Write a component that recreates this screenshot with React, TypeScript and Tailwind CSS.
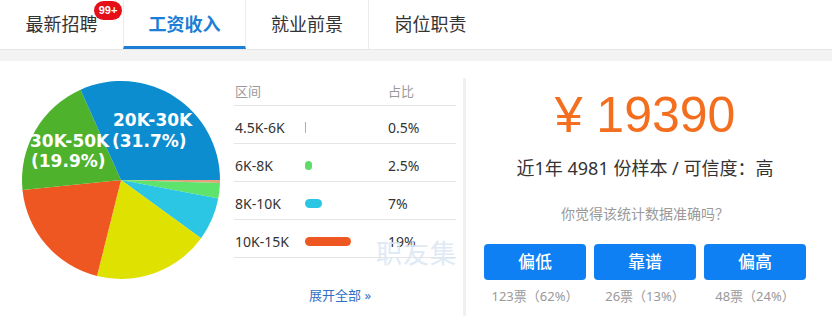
import React from 'react'

const slices = [
  { pct: 0.5, color: '#e2a27c' },
  { pct: 2.5, color: '#5ee36c' },
  { pct: 7, color: '#2bc6e4' },
  { pct: 18.9, color: '#dfe100' },
  { pct: 19.5, color: '#ef5722' },
  { pct: 19.9, color: '#4fb22c' },
  { pct: 31.7, color: '#0c8dd0' },
]

const rows = [
  { range: '4.5K-6K', pct: '0.5%', w: 1, color: '#ee9a6c', line: true },
  { range: '6K-8K', pct: '2.5%', w: 7, color: '#5edb68' },
  { range: '8K-10K', pct: '7%', w: 17, color: '#2bc6e4' },
  { range: '10K-15K', pct: '19%', w: 46, color: '#ef5722' },
]

const votes = [
  { label: '偏低', count: '123票（62%）' },
  { label: '靠谱', count: '26票（13%）' },
  { label: '偏高', count: '48票（24%）' },
]

const tabs = ['最新招聘', '工资收入', '就业前景', '岗位职责']

function Pie() {
  const cx = 121
  const cy = 119
  const r = 99
  let start = 0
  return (
    <svg width="230" height="254" className="shrink-0">
      {slices.map((s, i) => {
        const a0 = (start / 100) * Math.PI * 2
        start += s.pct
        const a1 = (start / 100) * Math.PI * 2
        const large = a1 - a0 > Math.PI ? 1 : 0
        const d = `M${cx},${cy} L${cx + r * Math.cos(a0)},${cy + r * Math.sin(a0)} A${r},${r} 0 ${large} 1 ${cx + r * Math.cos(a1)},${cy + r * Math.sin(a1)} Z`
        return <path key={i} d={d} fill={s.color} />
      })}
      <g fill="#fff" fontFamily="'DejaVu Sans', sans-serif" fontWeight="bold" fontSize="17">
        <text x="113" y="65">20K-30K</text>
        <text x="112" y="86">(31.7%)</text>
        <text x="30" y="86">30K-50K</text>
        <text x="31" y="106">(19.9%)</text>
      </g>
    </svg>
  )
}

export default function App() {
  return (
    <div className="w-[832px] h-[316px] bg-white overflow-hidden" style={{ fontFamily: "'Noto Sans', 'Noto Sans CJK SC', sans-serif" }}>
      {/* tab bar */}
      <div className="flex h-[49px] bg-white">
        {tabs.map((t, i) => (
          <div
            key={t}
            className={`relative w-[123px] flex items-center justify-center text-[18px] ${
              i === 1
                ? 'text-[#1c7ed6] font-semibold border-b-[3px] border-b-[#1c7ed6] border-x border-x-[#ececec] pt-[3px]'
                : 'text-[#333]'
            } ${i === 2 ? 'border-r border-r-[#ececec]' : ''}`}
          >
            {t}
            {i === 0 && (
              <span className="absolute left-[94px] top-[1px] h-[19px] w-[28px] rounded-full bg-[#e50f17] text-white text-[11px] font-bold leading-[19px] text-center font-['Liberation_Sans']">
                99+
              </span>
            )}
          </div>
        ))}
      </div>
      <div className="h-[12px] bg-[#f3f3f3] border-t border-[#e6e6e6]" />

      {/* content */}
      <div className="flex h-[255px]">
        <Pie />

        <div className="relative w-[222px] ml-[4px] mt-[17px] shrink-0">
          <div className="grid grid-cols-[70px_83px_1fr] h-[28px] items-center border-b border-[#e5e5e5] text-[13px] text-[#999] pl-[1px]">
            <span>区间</span>
            <span />
            <span>占比</span>
          </div>
          {rows.map((r) => (
            <div key={r.range} className="grid grid-cols-[70px_83px_1fr] h-[38px] pt-[6px] items-center border-b border-[#e5e5e5] text-[14px] text-[#333] pl-[1px]">
              <span>{r.range}</span>
              <span className="flex items-center">
                {r.line ? (
                  <span className="block w-[1px] h-[11px]" style={{ backgroundColor: r.color }} />
                ) : (
                  <span className="block h-[9px] rounded-full" style={{ width: r.w, backgroundColor: r.color }} />
                )}
              </span>
              <span>{r.pct}</span>
            </div>
          ))}
          <div className="mt-[28px] text-center text-[13px] text-[#2f6fc4] pr-[10px]">展开全部 »</div>
          <div className="absolute left-[142px] top-[160px] whitespace-nowrap text-[26px] leading-[30px] text-[#dce8f5] tracking-[1px] opacity-90">职友集</div>
        </div>

        <div className="w-[3px] ml-[7px] mt-[17px] bg-[#f0f0f0] shrink-0" />

        <div className="w-[358px] shrink-0 flex flex-col items-center pt-[29px]">
          <div className="h-[50px] leading-[50px] text-[50px] text-[#f36f1f] font-['Liberation_Sans']">¥ 19390</div>
          <div className="mt-[16px] leading-[24px] text-[18px] text-[#333]">近1年 4981 份样本 / 可信度：高</div>
          <div className="mt-[24px] leading-[20px] text-[14px] text-[#999]">你觉得该统计数据准确吗？</div>
          <div className="mt-[20px] flex gap-[8px]">
            {votes.map((v) => (
              <div key={v.label} className="flex flex-col items-center">
                <div className="w-[102px] h-[36px] rounded-[4px] bg-[#0f80f4] text-white text-[17px] font-medium flex items-center justify-center">
                  {v.label}
                </div>
                <div className="mt-[8px] leading-[16px] text-[13px] text-[#999]">{v.count}</div>
              </div>
            ))}
          </div>
        </div>
      </div>
    </div>
  )
}
